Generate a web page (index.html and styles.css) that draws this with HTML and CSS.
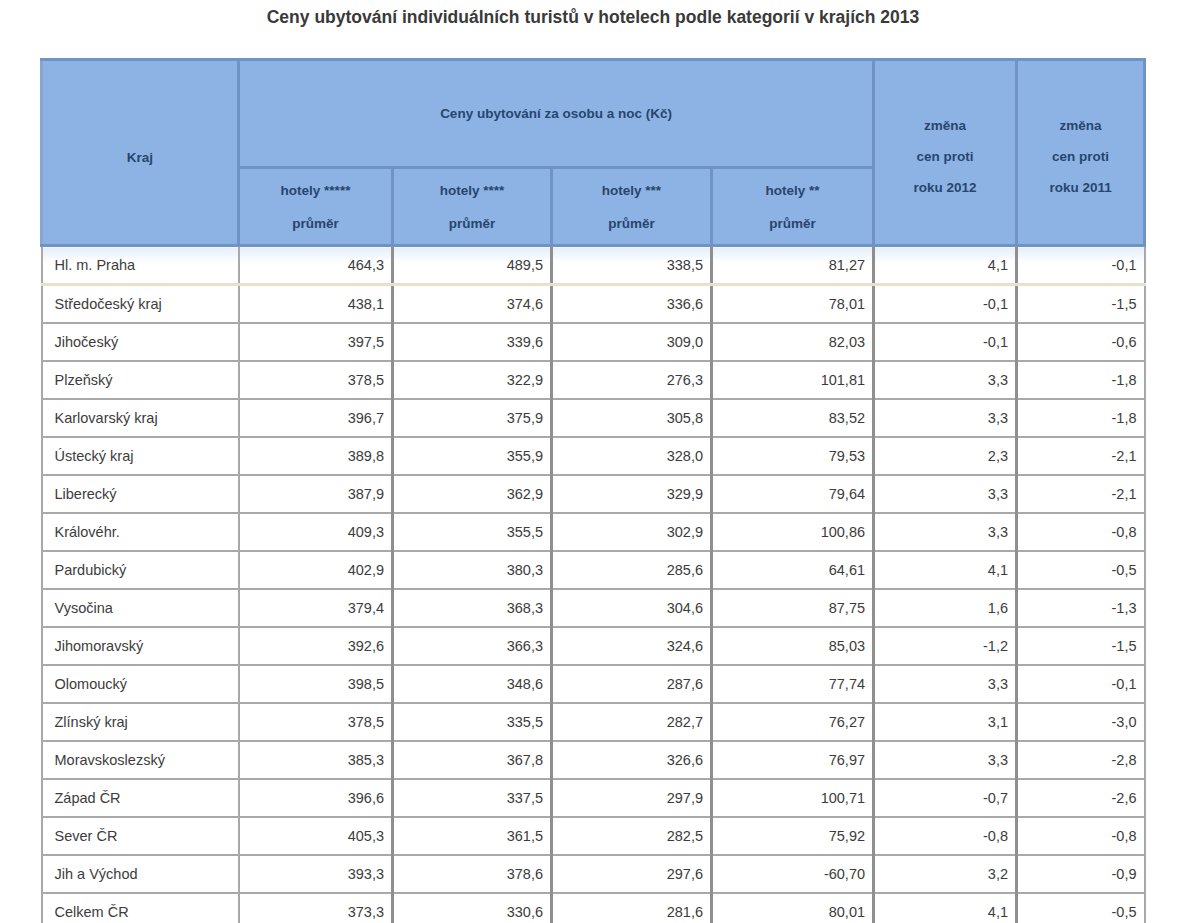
FILE: index.html
```html
<!DOCTYPE html>
<html lang="cs">
<head>
<meta charset="utf-8">
<title>Ceny ubytování</title>
<link rel="stylesheet" href="styles.css">
</head>
<body>
<div class="page">
  <h1 class="title">Ceny ubytování individuálních turistů v hotelech podle kategorií v krajích 2013</h1>
  <table class="grid">
    <colgroup>
      <col class="c1"><col class="c2"><col class="c3"><col class="c4"><col class="c5"><col class="c6"><col class="c7">
    </colgroup>
    <thead>
      <tr class="h1">
        <th rowspan="2" class="hname">Kraj</th>
        <th colspan="4" class="hgroup">Ceny ubytování za osobu a noc (Kč)</th>
        <th rowspan="2" class="hside">změna<br>cen proti<br>roku 2012</th>
        <th rowspan="2" class="hside">změna<br>cen proti<br>roku 2011</th>
      </tr>
      <tr class="h2">
        <th>hotely *****<br>průměr</th>
        <th>hotely ****<br>průměr</th>
        <th>hotely ***<br>průměr</th>
        <th>hotely **<br>průměr</th>
      </tr>
    </thead>
    <tbody>
      <tr class="first"><td>Hl. m. Praha</td><td>464,3</td><td>489,5</td><td>338,5</td><td>81,27</td><td>4,1</td><td>-0,1</td></tr>
      <tr><td>Středočeský kraj</td><td>438,1</td><td>374,6</td><td>336,6</td><td>78,01</td><td>-0,1</td><td>-1,5</td></tr>
      <tr><td>Jihočeský</td><td>397,5</td><td>339,6</td><td>309,0</td><td>82,03</td><td>-0,1</td><td>-0,6</td></tr>
      <tr><td>Plzeňský</td><td>378,5</td><td>322,9</td><td>276,3</td><td>101,81</td><td>3,3</td><td>-1,8</td></tr>
      <tr><td>Karlovarský kraj</td><td>396,7</td><td>375,9</td><td>305,8</td><td>83,52</td><td>3,3</td><td>-1,8</td></tr>
      <tr><td>Ústecký kraj</td><td>389,8</td><td>355,9</td><td>328,0</td><td>79,53</td><td>2,3</td><td>-2,1</td></tr>
      <tr><td>Liberecký</td><td>387,9</td><td>362,9</td><td>329,9</td><td>79,64</td><td>3,3</td><td>-2,1</td></tr>
      <tr><td>Královéhr.</td><td>409,3</td><td>355,5</td><td>302,9</td><td>100,86</td><td>3,3</td><td>-0,8</td></tr>
      <tr><td>Pardubický</td><td>402,9</td><td>380,3</td><td>285,6</td><td>64,61</td><td>4,1</td><td>-0,5</td></tr>
      <tr><td>Vysočina</td><td>379,4</td><td>368,3</td><td>304,6</td><td>87,75</td><td>1,6</td><td>-1,3</td></tr>
      <tr><td>Jihomoravský</td><td>392,6</td><td>366,3</td><td>324,6</td><td>85,03</td><td>-1,2</td><td>-1,5</td></tr>
      <tr><td>Olomoucký</td><td>398,5</td><td>348,6</td><td>287,6</td><td>77,74</td><td>3,3</td><td>-0,1</td></tr>
      <tr><td>Zlínský kraj</td><td>378,5</td><td>335,5</td><td>282,7</td><td>76,27</td><td>3,1</td><td>-3,0</td></tr>
      <tr><td>Moravskoslezský</td><td>385,3</td><td>367,8</td><td>326,6</td><td>76,97</td><td>3,3</td><td>-2,8</td></tr>
      <tr><td>Západ ČR</td><td>396,6</td><td>337,5</td><td>297,9</td><td>100,71</td><td>-0,7</td><td>-2,6</td></tr>
      <tr><td>Sever ČR</td><td>405,3</td><td>361,5</td><td>282,5</td><td>75,92</td><td>-0,8</td><td>-0,8</td></tr>
      <tr><td>Jih a Východ</td><td>393,3</td><td>378,6</td><td>297,6</td><td>-60,70</td><td>3,2</td><td>-0,9</td></tr>
      <tr><td>Celkem ČR</td><td>373,3</td><td>330,6</td><td>281,6</td><td>80,01</td><td>4,1</td><td>-0,5</td></tr>
    </tbody>
  </table>
</div>
</body>
</html>
```

FILE: styles.css
```css
html, body {
  margin: 0;
  padding: 0;
  background: #ffffff;
}

.page {
  padding: 6px 0 0 40px;
  font-family: "Liberation Sans", Arial, sans-serif;
}

.title {
  margin: 0;
  width: 1180px;
  margin-left: -40px;
  height: 52px;
  font-size: 17.5px;
  font-weight: bold;
  color: #3a3a3a;
  text-align: center;
  line-height: 22px;
  padding-left: 6px;
  box-sizing: border-box;
}

.grid {
  border-collapse: collapse;
  table-layout: fixed;
  width: 1103px;
  font-size: 14.5px;
  color: #3c3c3c;
}

.c1 { width: 197px; }
.c2 { width: 154px; }
.c3 { width: 159px; }
.c4 { width: 160px; }
.c5 { width: 162px; }
.c6 { width: 143px; }
.c7 { width: 128px; }

.grid thead th {
  background: #8db3e4;
  color: #27466f;
  font-size: 13.5px;
  font-weight: bold;
  border: 3px solid #6f93c4;
  line-height: 24px;
  padding: 0;
}

.grid thead tr.h1 th {
  height: 105px;
}

.grid thead tr.h2 th {
  height: 75px;
  line-height: 33px;
}

.grid thead th.hname {
  text-align: center;
  padding-top: 10px;
}

.grid thead th.hgroup {
  padding-bottom: 0;
}

.grid thead th.hside {
  line-height: 31px;
  padding-top: 8px;
}

.grid thead tr.h1 th:first-child {
  border-left-color: #8aa6cc;
}

.grid tbody td {
  height: 36px;
  border: 2px solid #a9a9a9;
  padding: 0 7px;
  text-align: right;
  white-space: nowrap;
  overflow: hidden;
}

.grid tbody td:first-child {
  text-align: left;
  padding-left: 12px;
}

.grid tbody td:nth-child(2),
.grid tbody td:nth-child(3),
.grid tbody td:nth-child(4),
.grid tbody td:nth-child(5),
.grid tbody td:nth-child(6) {
  border-right: 3px solid #8f8f8f;
}

.grid tbody tr.first td {
  background: linear-gradient(#e6effa 0%, #ffffff 45%);
  border-top-color: #6f93c4;
  border-bottom: 3px solid #e6e1c8;
}
```
